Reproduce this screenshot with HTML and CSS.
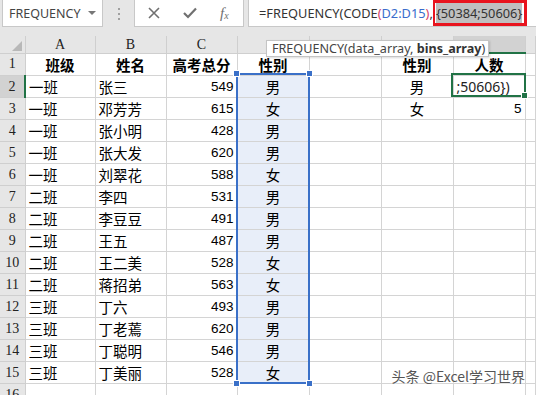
FILE: index.html
```html
<!DOCTYPE html>
<html lang="zh-CN">
<head>
  <meta charset="UTF-8">
  <title>FREQUENCY</title>
  <link rel="stylesheet" href="styles.css">
</head>
<body>
  <div class="formula-bar">
    <div class="name-box">
      <span>FREQUENCY</span>
      <span class="caret"></span>
    </div>
    <div class="grip">
      <svg width="4" height="12" viewBox="0 0 4 12"><rect x="1" y="0" width="2" height="2" fill="#a0a0a0"/><rect x="1" y="5" width="2" height="2" fill="#a0a0a0"/><rect x="1" y="10" width="2" height="2" fill="#a0a0a0"/></svg>
    </div>
    <div class="fx-buttons">
      <svg width="12" height="12" viewBox="0 0 12 12"><path d="M1 1 L11 11 M11 1 L1 11" stroke="#707070" stroke-width="1.6" fill="none"/></svg>
      <svg width="14" height="12" viewBox="0 0 14 12"><path d="M1 6 L5 10 L13 1.5" stroke="#707070" stroke-width="2.2" fill="none"/></svg>
      <span class="fx"><i>f</i><sub>x</sub></span>
    </div>
    <div class="formula-input">
      <span>=FREQUENCY(CODE</span><span class="paren">(</span><span class="ref">D2:D15</span><span class="paren">)</span><span>,</span><span class="mark"><span class="hl">{50384;50606}</span></span>
    </div>
  </div>

  <div class="sheet">
    <table class="grid">
      <colgroup>
        <col class="c-rh"><col class="c-a"><col class="c-b"><col class="c-c"><col class="c-d"><col class="c-e"><col class="c-f"><col class="c-g"><col class="c-h">
      </colgroup>
      <tr class="col-heads">
        <th class="corner"><span class="tri"></span></th><th>A</th><th>B</th><th>C</th><th></th><th></th><th></th><th class="on"></th><th></th>
      </tr>
      <tr class="r1">
        <th>1</th><td class="ctr b">班级</td><td class="ctr b">姓名</td><td class="ctr b">高考总分</td><td class="ctr b">性别</td><td></td><td class="ctr b">性别</td><td class="ctr b">人数</td><td></td>
      </tr>
      <tr>
        <th class="on">2</th><td>一班</td><td>张三</td><td class="num">549</td><td class="ctr sel">男</td><td></td><td class="ctr">男</td><td class="edit">;50606})</td><td></td>
      </tr>
      <tr>
        <th>3</th><td>一班</td><td>邓芳芳</td><td class="num">615</td><td class="ctr sel">女</td><td></td><td class="ctr">女</td><td class="num">5</td><td></td>
      </tr>
      <tr>
        <th>4</th><td>一班</td><td>张小明</td><td class="num">428</td><td class="ctr sel">男</td><td></td><td></td><td></td><td></td>
      </tr>
      <tr>
        <th>5</th><td>一班</td><td>张大发</td><td class="num">620</td><td class="ctr sel">男</td><td></td><td></td><td></td><td></td>
      </tr>
      <tr>
        <th>6</th><td>一班</td><td>刘翠花</td><td class="num">588</td><td class="ctr sel">女</td><td></td><td></td><td></td><td></td>
      </tr>
      <tr>
        <th>7</th><td>二班</td><td>李四</td><td class="num">531</td><td class="ctr sel">男</td><td></td><td></td><td></td><td></td>
      </tr>
      <tr>
        <th>8</th><td>二班</td><td>李豆豆</td><td class="num">491</td><td class="ctr sel">男</td><td></td><td></td><td></td><td></td>
      </tr>
      <tr>
        <th>9</th><td>二班</td><td>王五</td><td class="num">487</td><td class="ctr sel">男</td><td></td><td></td><td></td><td></td>
      </tr>
      <tr>
        <th>10</th><td>二班</td><td>王二美</td><td class="num">528</td><td class="ctr sel">女</td><td></td><td></td><td></td><td></td>
      </tr>
      <tr>
        <th>11</th><td>二班</td><td>蒋招弟</td><td class="num">563</td><td class="ctr sel">女</td><td></td><td></td><td></td><td></td>
      </tr>
      <tr>
        <th>12</th><td>三班</td><td>丁六</td><td class="num">493</td><td class="ctr sel">男</td><td></td><td></td><td></td><td></td>
      </tr>
      <tr>
        <th>13</th><td>三班</td><td>丁老蔫</td><td class="num">620</td><td class="ctr sel">男</td><td></td><td></td><td></td><td></td>
      </tr>
      <tr>
        <th>14</th><td>三班</td><td>丁聪明</td><td class="num">546</td><td class="ctr sel">男</td><td></td><td></td><td></td><td></td>
      </tr>
      <tr>
        <th>15</th><td>三班</td><td>丁美丽</td><td class="num">528</td><td class="ctr sel">女</td><td></td><td></td><td></td><td></td>
      </tr>
      <tr>
        <th>16</th><td></td><td></td><td></td><td></td><td></td><td></td><td></td><td></td>
      </tr>
    </table>

    <!-- selection D2:D15 -->
    <div class="range">
      <span class="h tl"></span><span class="h tr"></span><span class="h bl"></span><span class="h br"></span>
    </div>
    <!-- active cell G2 -->
    <div class="active"><span class="fill"></span></div>

    <div class="tip">FREQUENCY(data_array, <b>bins_array</b>)</div>
    <div class="watermark">头条 @Excel学习世界</div>
  </div>
</body>
</html>
```
FILE: styles.css
```css
html, body {
  margin: 0;
  padding: 0;
}

body {
  width: 536px;
  height: 395px;
  overflow: hidden;
  background: #e6e6e6;
  font-family: 'Liberation Sans', 'Noto Sans CJK SC', sans-serif;
  color: #000;
}

/* formula bar */
.formula-bar {
  display: flex;
  align-items: stretch;
  height: 27px;
}

.name-box {
  display: flex;
  align-items: center;
  justify-content: space-between;
  width: 89px;
  margin-left: 2px;
  padding: 0 4px 0 6px;
  background: #fff;
  border: 1px solid #c8c8c8;
  border-top: none;
  font-family: 'Noto Sans', sans-serif;
  font-size: 12.5px;
  color: #444;
}

.caret {
  width: 0;
  height: 0;
  border-left: 4px solid transparent;
  border-right: 4px solid transparent;
  border-top: 4px solid #777;
  margin-right: 2px;
}

.grip {
  display: flex;
  align-items: center;
  justify-content: center;
  width: 31px;
}

.fx-buttons {
  display: flex;
  align-items: center;
  gap: 23px;
  width: 110px;
  padding-left: 13px;
  box-sizing: border-box;
  background: #fff;
  border: 1px solid #c8c8c8;
  border-top: none;
}

.fx {
  font-family: 'Liberation Serif', serif;
  font-size: 15px;
  color: #707070;
}

.fx sub {
  font-size: 10px;
  font-style: italic;
  vertical-align: -1px;
}

.formula-input {
  display: flex;
  align-items: center;
  flex: 1;
  margin-left: 4px;
  padding-left: 10px;
  background: #fff;
  border: 1px solid #c8c8c8;
  border-top: none;
  border-right: none;
  font-family: 'Noto Sans', sans-serif;
  font-size: 12.8px;
  color: #333;
  white-space: nowrap;
}

.formula-input .paren {
  color: #d6426a;
}

.formula-input .ref {
  color: #3a6ccc;
}

.mark {
  display: flex;
  align-items: center;
  height: 20px;
  margin-left: 0;
  padding: 0 2px 0 1px;
  border: 3px solid #e8141e;
  border-left-width: 2px;
}

.hl {
  background: #bfbfbf;
  line-height: 20px;
}

/* sheet */
.sheet {
  position: relative;
  margin-top: 9px;
}

.grid {
  table-layout: fixed;
  border-collapse: collapse;
  width: 536px;
  background: #fff;
}

.c-rh { width: 25px; }
.c-a { width: 70px; }
.c-b { width: 71px; }
.c-c { width: 71px; }
.c-d { width: 72px; }
.c-e { width: 72px; }
.c-f { width: 72px; }
.c-g { width: 72px; }

.grid tr {
  height: 22px;
}

.grid tr.col-heads {
  height: 17px;
}

.grid tr.r1 {
  height: 21px;
}

.grid th {
  padding: 0;
  background: #e6e6e6;
  border: 1px solid #cfcfcf;
  font-family: 'Liberation Serif', serif;
  font-weight: normal;
  font-size: 14px;
  color: #222;
}

.col-heads th {
  border-top: none;
  vertical-align: bottom;
  line-height: 16px;
}

.grid tr > th:first-child {
  border-left: none;
  text-align: center;
}

.grid th.on {
  background: #d2d2d2;
}

.col-heads th.on {
  border-bottom: 2px solid #217346;
}

.grid tr > th.on:first-child {
  border-right: 2px solid #217346;
}

.corner {
  position: relative;
}

.tri {
  position: absolute;
  right: 3px;
  bottom: 2px;
  width: 0;
  height: 0;
  border-left: 10px solid transparent;
  border-bottom: 10px solid #b8b8b8;
}

.grid td {
  padding: 0 3px;
  border: 1px solid #d4d4d4;
  font-size: 14.5px;
  white-space: nowrap;
  overflow: hidden;
}

.grid td.num {
  text-align: right;
  font-size: 13.5px;
}

.grid td.ctr {
  text-align: center;
}

.grid td.b {
  font-weight: bold;
}

.grid td.sel {
  background: #e8eef9;
}

.grid td.edit {
  font-size: 14px;
  font-family: 'Noto Sans', sans-serif;
  color: #222;
  padding-left: 3px;
}

.range {
  position: absolute;
  left: 236px;
  top: 37px;
  width: 70px;
  height: 307px;
  border: 2px solid #3a70c8;
}

.h {
  position: absolute;
  width: 5px;
  height: 5px;
  background: #3a70c8;
  border: 1px solid #fff;
}

.h.tl { left: -5px; top: -5px; }
.h.tr { right: -5px; top: -5px; }
.h.bl { left: -5px; bottom: -5px; }
.h.br { right: -5px; bottom: -5px; }

.active {
  position: absolute;
  left: 451px;
  top: 37px;
  width: 71px;
  height: 20px;
  border: 2px solid #217346;
}

.fill {
  position: absolute;
  right: -4px;
  bottom: -4px;
  width: 5px;
  height: 5px;
  background: #217346;
  border: 1px solid #fff;
}

.tip {
  position: absolute;
  left: 266px;
  top: 4px;
  height: 15px;
  padding: 0 3px 0 5px;
  background: #fff;
  border: 1px solid #c4c4c4;
  box-shadow: 1px 1px 2px rgba(0, 0, 0, 0.15);
  font-family: 'Noto Sans', sans-serif;
  font-size: 12.6px;
  line-height: 15px;
  color: #444;
  white-space: nowrap;
}

.tip b {
  color: #333;
}

.watermark {
  position: absolute;
  right: 11px;
  top: 330px;
  font-family: 'Noto Sans CJK SC', sans-serif;
  font-size: 14px;
  color: #555;
  text-shadow: 0 0 2px #fff, 0 0 2px #fff;
}
```
